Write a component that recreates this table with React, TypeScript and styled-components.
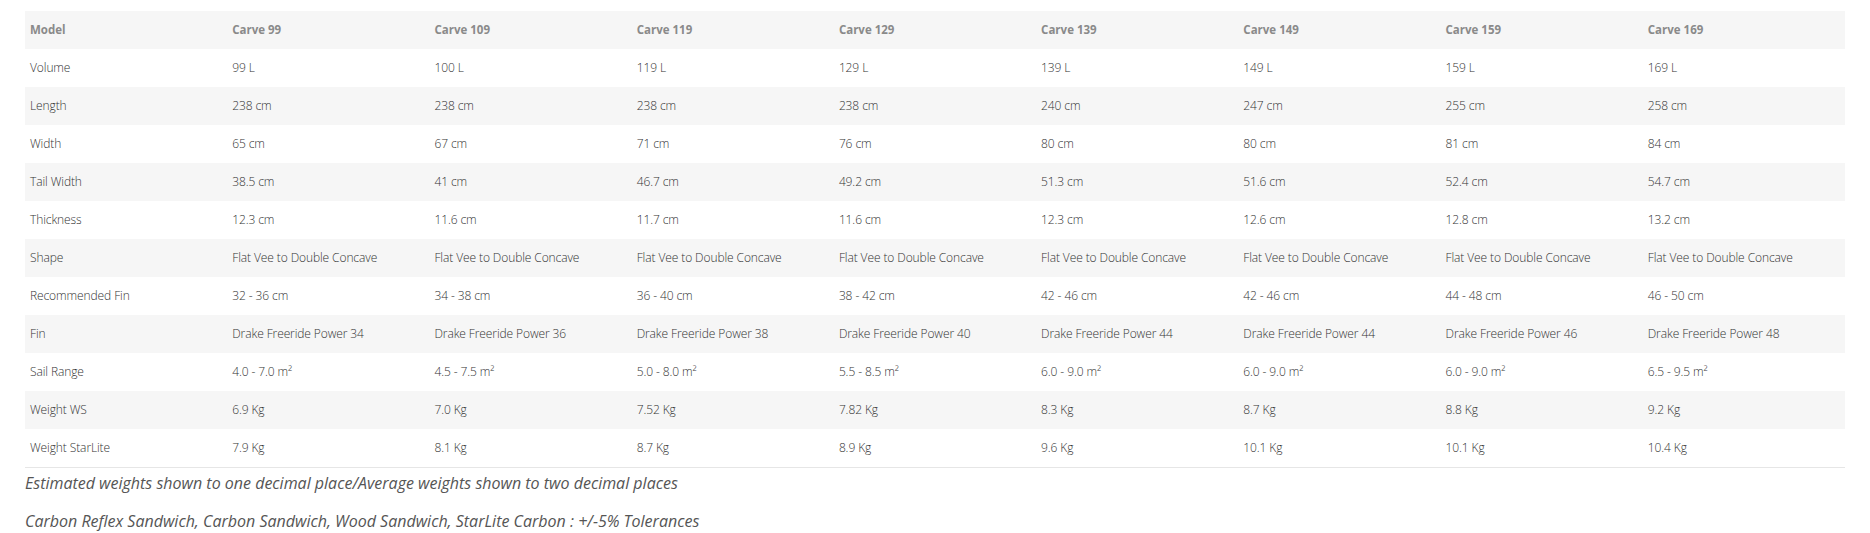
import React from 'react';
import styled, { createGlobalStyle } from 'styled-components';

const GlobalStyle = createGlobalStyle`
  body {
    margin: 0;
    background: #ffffff;
    font-family: 'Open Sans', 'Liberation Sans', sans-serif;
  }
`
const Wrapper = styled.div`
  padding: 11px 25px 0 25px;
`
const SpecTable = styled.table`
  width: 100%;
  border-collapse: collapse;
  table-layout: fixed;
  border-bottom: 1px solid #e6e6e6;
`
const Row = styled.tr<{ shaded: boolean }>`
  height: 38px;
  background-color: ${(props) => (props.shaded ? '#f6f6f6' : '#ffffff')};
`
const HeadCell = styled.th`
  padding: 0 5px 1px 5px;
  text-align: left;
  font-size: 11.5px;
  font-weight: 700;
  color: #8a8a8a;
  white-space: nowrap;
`
const Cell = styled.td`
  padding: 0 5px 1px 5px;
  font-size: 12px;
  font-weight: 300;
  color: #333333;
  letter-spacing: -0.1px;
  white-space: nowrap;
`
const Note = styled.p`
  margin: 0 0 8px 0;
  line-height: 30px;
  font-size: 16px;
  font-style: italic;
  color: #555555;
`

const models = ['Carve 99', 'Carve 109', 'Carve 119', 'Carve 129', 'Carve 139', 'Carve 149', 'Carve 159', 'Carve 169'];

const specs: [string, string[]][] = [
  ['Volume', ['99 L', '100 L', '119 L', '129 L', '139 L', '149 L', '159 L', '169 L']],
  ['Length', ['238 cm', '238 cm', '238 cm', '238 cm', '240 cm', '247 cm', '255 cm', '258 cm']],
  ['Width', ['65 cm', '67 cm', '71 cm', '76 cm', '80 cm', '80 cm', '81 cm', '84 cm']],
  ['Tail Width', ['38.5 cm', '41 cm', '46.7 cm', '49.2 cm', '51.3 cm', '51.6 cm', '52.4 cm', '54.7 cm']],
  ['Thickness', ['12.3 cm', '11.6 cm', '11.7 cm', '11.6 cm', '12.3 cm', '12.6 cm', '12.8 cm', '13.2 cm']],
  ['Shape', Array(8).fill('Flat Vee to Double Concave')],
  ['Recommended Fin', ['32 - 36 cm', '34 - 38 cm', '36 - 40 cm', '38 - 42 cm', '42 - 46 cm', '42 - 46 cm', '44 - 48 cm', '46 - 50 cm']],
  ['Fin', [34, 36, 38, 40, 44, 44, 46, 48].map((n) => `Drake Freeride Power ${n}`)],
  ['Sail Range', ['4.0 - 7.0 m²', '4.5 - 7.5 m²', '5.0 - 8.0 m²', '5.5 - 8.5 m²', '6.0 - 9.0 m²', '6.0 - 9.0 m²', '6.0 - 9.0 m²', '6.5 - 9.5 m²']],
  ['Weight WS', ['6.9 Kg', '7.0 Kg', '7.52 Kg', '7.82 Kg', '8.3 Kg', '8.7 Kg', '8.8 Kg', '9.2 Kg']],
  ['Weight StarLite', ['7.9 Kg', '8.1 Kg', '8.7 Kg', '8.9 Kg', '9.6 Kg', '10.1 Kg', '10.1 Kg', '10.4 Kg']],
];

export default function App() {
  return (
    <>
      <GlobalStyle />
      <Wrapper>
        <SpecTable>
          <thead>
            <Row shaded={true}>
              <HeadCell>Model</HeadCell>
              {models.map((m) => (
                <HeadCell key={m}>{m}</HeadCell>
              ))}
            </Row>
          </thead>
          <tbody>
            {specs.map(([label, values], i) => (
              <Row key={label} shaded={i % 2 === 1}>
                <Cell>{label}</Cell>
                {values.map((v, j) => (
                  <Cell key={`${label}-${j}`}>{v}</Cell>
                ))}
              </Row>
            ))}
          </tbody>
        </SpecTable>
        <Note>Estimated weights shown to one decimal place/Average weights shown to two decimal places</Note>
        <Note>Carbon Reflex Sandwich, Carbon Sandwich, Wood Sandwich, StarLite Carbon : +/-5% Tolerances</Note>
      </Wrapper>
    </>
  );
}
